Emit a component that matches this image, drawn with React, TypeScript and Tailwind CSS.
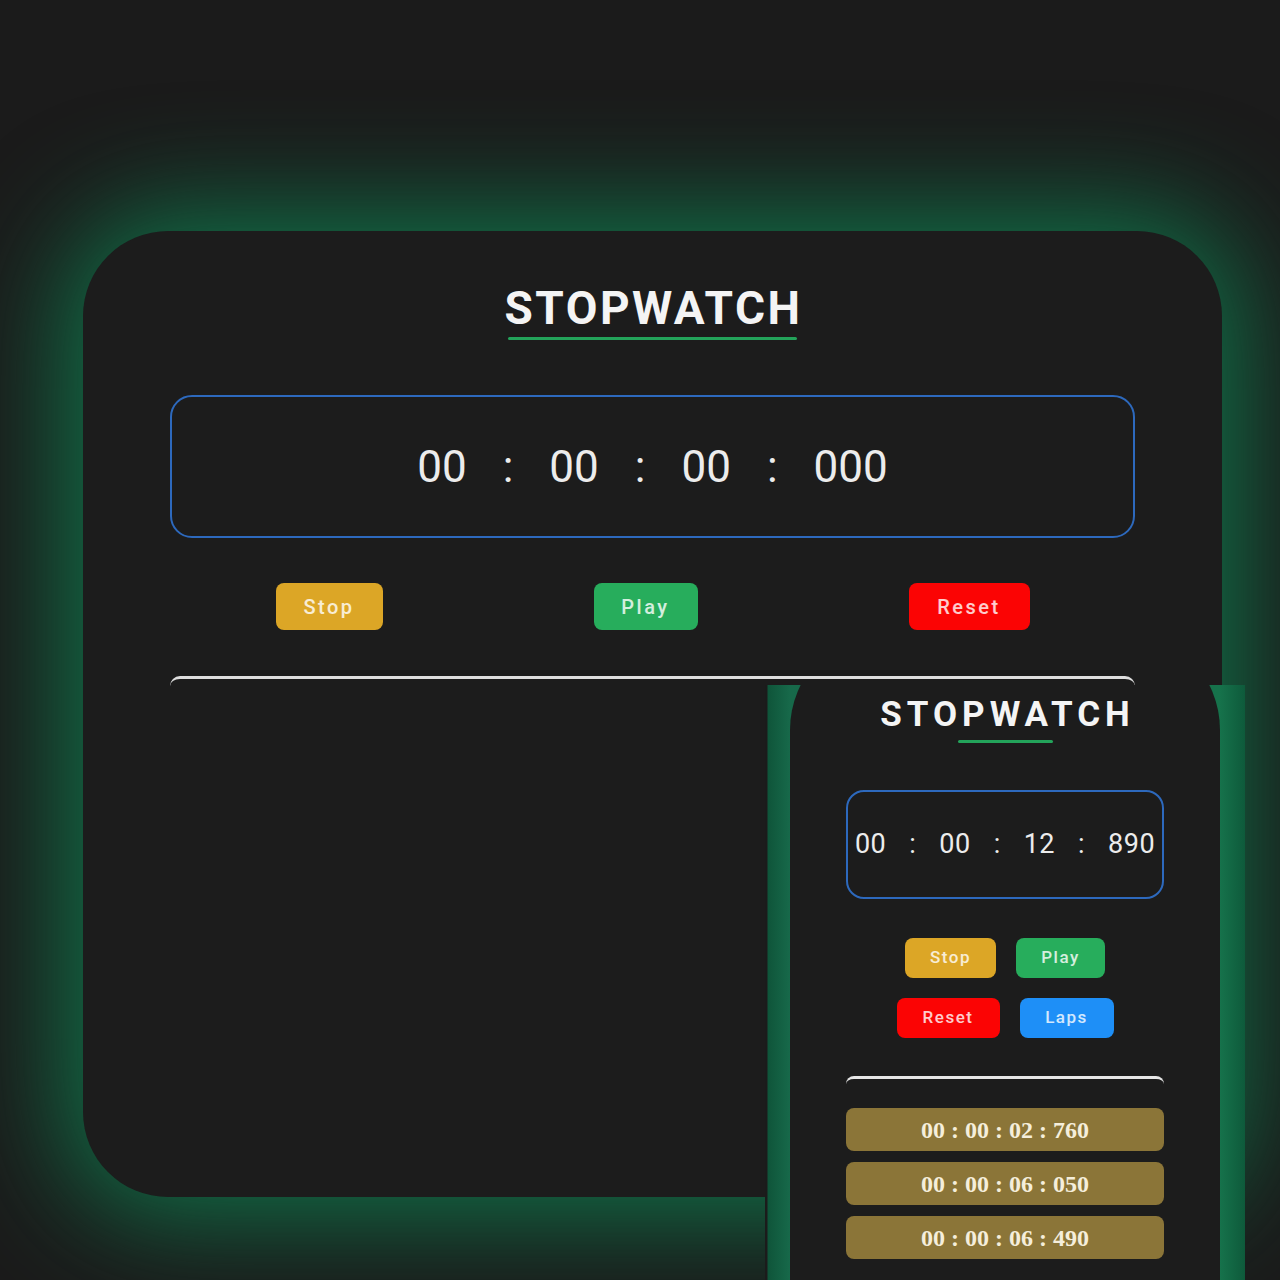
import React from "react";

const roboto = { fontFamily: "Roboto, 'Liberation Sans', sans-serif" };

function Btn({ label, color, w, h, size }: { label: string; color: string; w: string; h: string; size: string }) {
  return (
    <div
      className={`${color} ${w} ${h} ${size} flex items-center justify-center rounded-[8px] font-medium text-white/80`}
      style={roboto}
    >
      {label}
    </div>
  );
}

export default function App() {
  const big = ["00", ":", "00", ":", "00", ":", "000"];
  const small = ["00", ":", "00", ":", "12", ":", "890"];
  const laps = ["00 : 00 : 02 : 760", "00 : 00 : 06 : 050", "00 : 00 : 06 : 490"];
  return (
    <div className="relative w-[1280px] h-[1280px] overflow-hidden bg-[#1b1b1b] pt-[231px] pl-[83px]" style={roboto}>
      {/* Desktop card */}
      <div className="w-[1139px] h-[966px] rounded-[85px] bg-[#1c1c1c] shadow-[0_0_110px_20px_#107249] flex flex-col items-center pt-[54px] px-[87px]">
        <h1 className="text-[46px] leading-none font-bold tracking-[2.5px] text-[#f4f4f4] pl-[2px]">STOPWATCH</h1>
        <div className="mt-[6px] w-[289px] h-[3px] bg-[#23a35a] rounded-full" />
        <div className="mt-[55px] w-full h-[143px] shrink-0 border-2 border-[#2d69bd] rounded-[22px] flex items-center justify-center gap-[36px] text-[44px] leading-none text-[#ececec]">
          {big.map((t, i) => (
            <span key={i}>{t}</span>
          ))}
        </div>
        <div className="mt-[45px] w-full flex justify-around">
          <Btn label="Stop" color="bg-[#dca626]" w="w-[107px]" h="h-[47px]" size="text-[20px] tracking-[2.5px]" />
          <Btn label="Play" color="bg-[#27ad5c]" w="w-[104px]" h="h-[47px]" size="text-[20px] tracking-[2.5px]" />
          <Btn label="Reset" color="bg-[#fb0404]" w="w-[121px]" h="h-[47px]" size="text-[20px] tracking-[2.5px]" />
        </div>
        <div className="mt-[46px] w-full h-[12px] border-t-[3px] border-[#dedede] rounded-t-[10px]" />
      </div>

      {/* Phone screenshot overlay */}
      <div className="absolute left-[765px] top-[685px] w-[480px] h-[595px] overflow-hidden flex px-[25px] bg-[linear-gradient(90deg,#1b1b1b_0px,#1b1b1b_2px,#0f553a_3px,#17694a_25px,#16724b_455px,#0e5a3b_480px)]">
        <div className="flex-1 -mt-[55px] rounded-t-[100px] bg-[#1c1c1c] flex flex-col items-center pt-[67px]">
          <h2 className="text-[35px] leading-none font-bold tracking-[5px] text-[#f4f4f4] pl-[5px]">STOPWATCH</h2>
          <div className="mt-[8px] w-[95px] h-[3px] bg-[#23a35a] rounded-full" />
          <div className="mt-[47px] w-[318px] h-[109px] shrink-0 border-2 border-[#2d69bd] rounded-[18px] flex items-center justify-center gap-[23px] text-[27px] leading-none text-[#ececec] tracking-[0.5px]">
            {small.map((t, i) => (
              <span key={i}>{t}</span>
            ))}
          </div>
          <div className="mt-[39px] w-[318px] flex flex-wrap justify-center gap-x-[20px] gap-y-[20px]">
            <Btn label="Stop" color="bg-[#dca626]" w="w-[91px]" h="h-[40px]" size="text-[17px] tracking-[1.5px]" />
            <Btn label="Play" color="bg-[#27ad5c]" w="w-[89px]" h="h-[40px]" size="text-[17px] tracking-[1.5px]" />
            <Btn label="Reset" color="bg-[#fb0404]" w="w-[103px]" h="h-[40px]" size="text-[17px] tracking-[1.5px]" />
            <Btn label="Laps" color="bg-[#1e8ff7]" w="w-[94px]" h="h-[40px]" size="text-[17px] tracking-[1.5px]" />
          </div>
          <div className="mt-[38px] w-[318px] h-[12px] border-t-[3px] border-[#e6e6e6] rounded-t-[8px]" />
          <div className="mt-[20px] w-[318px] flex flex-col gap-[11px]">
            {laps.map((l) => (
              <div
                key={l}
                className="h-[43px] rounded-[8px] bg-[#8b7538] flex items-center justify-center text-[24px] font-bold text-[#f5eedb]"
                style={{ fontFamily: "'Liberation Serif', serif" }}
              >
                {l}
              </div>
            ))}
          </div>
        </div>
      </div>
    </div>
  );
}
